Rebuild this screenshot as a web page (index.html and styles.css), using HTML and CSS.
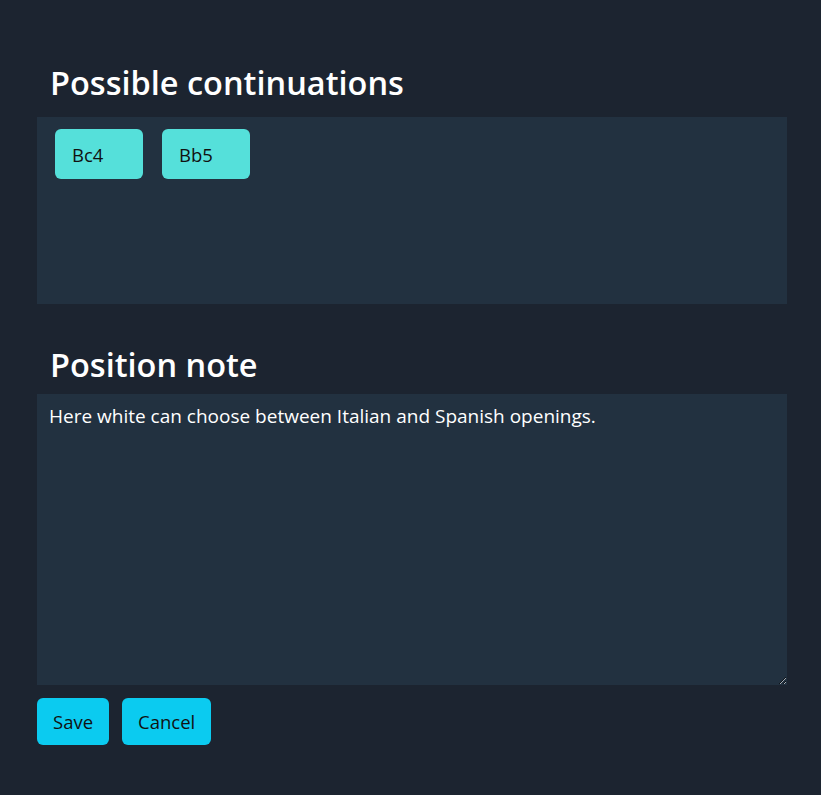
FILE: index.html
```html
<!DOCTYPE html>
<html>
<head>
<meta charset="utf-8">
<link rel="stylesheet" href="styles.css">
</head>
<body>
<main class="page">
  <section class="section">
    <h2 class="title">Possible continuations</h2>
    <div class="moves">
      <button class="chip">Bc4</button>
      <button class="chip">Bb5</button>
    </div>
  </section>
  <section class="section note-section">
    <h2 class="title">Position note</h2>
    <textarea class="note">Here white can choose between Italian and Spanish openings.</textarea>
    <div class="actions">
      <button class="btn btn-save">Save</button>
      <button class="btn btn-cancel">Cancel</button>
    </div>
  </section>
</main>
</body>
</html>
```

FILE: styles.css
```css
html, body {
  margin: 0;
  padding: 0;
  background: #1c2430;
  height: 100%;
}
body {
  font-family: "Open Sans", "Noto Sans", sans-serif;
  color: #ffffff;
}
.page {
  padding: 58px 34px 0 37px;
  display: flex;
  flex-direction: column;
}
.section {
  display: flex;
  flex-direction: column;
}
.title {
  margin: 0 0 0 13px;
  font-size: 32.5px;
  font-weight: 600;
  line-height: 50px;
  height: 59px;
  color: #ffffff;
}
.moves {
  background: #223140;
  height: 187px;
  padding: 12px 18px;
  box-sizing: border-box;
  display: flex;
  align-items: flex-start;
  gap: 19px;
}
.chip {
  width: 88px;
  height: 50px;
  border: none;
  border-radius: 6px;
  background: #55e0da;
  color: #111;
  font-family: inherit;
  font-size: 18.5px;
  text-align: left;
  padding: 0 0 0 17px;
}
.note-section {
  margin-top: 36px;
}
.note-section .title {
  height: 54px;
}
.note {
  background: #223140;
  border: none;
  outline: none;
  color: #ffffff;
  font-family: inherit;
  font-size: 19px;
  line-height: 24px;
  height: 291px;
  padding: 10px 12px;
  box-sizing: border-box;
  resize: vertical;
  margin: 0;
  display: block;
}
.actions {
  display: flex;
  gap: 13px;
  margin-top: 13px;
}
.btn {
  height: 47px;
  border: none;
  border-radius: 6px;
  background: #0bcbf0;
  color: #111;
  font-family: inherit;
  font-size: 18.5px;
  padding: 0 16px;
}
```
